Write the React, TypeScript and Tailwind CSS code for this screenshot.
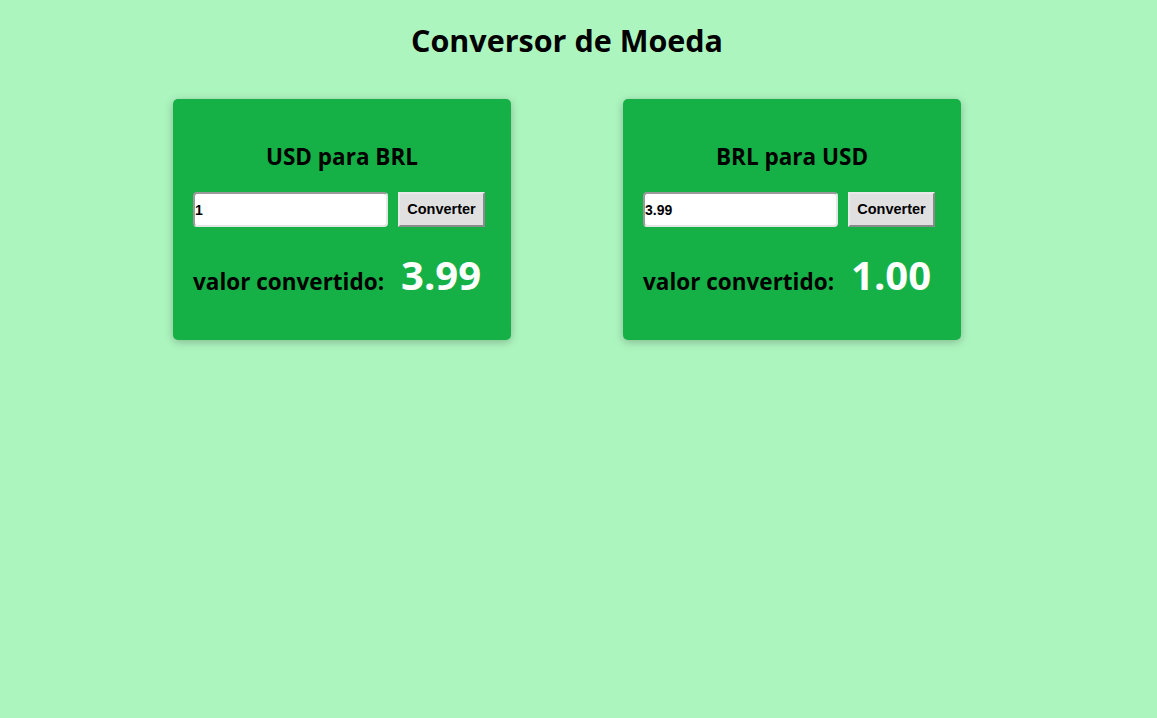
import React from "react";

function Card({ title, input, result }: { title: string; input: string; result: string }) {
  return (
    <div className="w-[338px] h-[241px] bg-[#16b146] rounded-[5px] shadow-[0_2px_8px_rgba(0,0,0,0.25)] px-[20px] flex flex-col">
      <h2 className="mt-[44px] text-center text-[22.5px] leading-[28px] font-bold text-black">{title}</h2>
      <div className="mt-[21px] flex gap-[10px] items-center">
        <input
          readOnly
          value={input}
          className="w-[195px] h-[35px] bg-white border-2 border-[#9a9a9a] border-b-[#e6e6e6] border-r-[#e6e6e6] rounded-[4px] px-0 text-[14px] font-bold text-black outline-none"
          style={{ fontFamily: '"Liberation Sans", Arial, sans-serif' }}
        />
        <button
          className="w-[87px] h-[35px] bg-[#e0e0e0] border-2 border-[#8a8a8a] border-t-[#e9e9e9] border-l-[#e9e9e9] text-[14.5px] font-bold text-black"
          style={{ fontFamily: '"Liberation Sans", Arial, sans-serif' }}
        >
          Converter
        </button>
      </div>
      <div className="mt-[24px] flex items-baseline gap-[17px]">
        <span className="text-[22.5px] font-bold text-black">valor convertido:</span>
        <span className="text-[40px] leading-[48px] font-bold text-white">{result}</span>
      </div>
    </div>
  );
}

export default function App() {
  return (
    <div
      className="min-h-[718px] w-full bg-[#adf5bf] pr-[23px]"
      style={{ fontFamily: '"Open Sans", "Noto Sans", sans-serif' }}
    >
      <h1 className="pt-[20px] text-center text-[30.5px] leading-[40px] font-bold text-black">Conversor de Moeda</h1>
      <div className="mt-[39px] flex justify-center gap-[112px]">
        <Card title="USD para BRL" input="1" result="3.99" />
        <Card title="BRL para USD" input="3.99" result="1.00" />
      </div>
    </div>
  );
}
